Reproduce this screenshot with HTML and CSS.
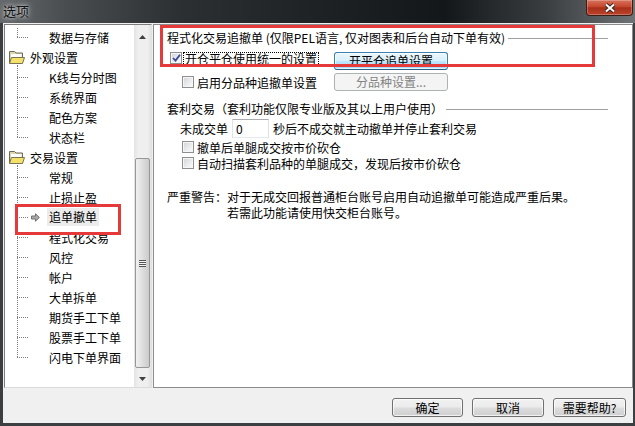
FILE: index.html
```html
<!DOCTYPE html>
<html lang="zh-CN">

<head>
    <meta charset="UTF-8">
    <meta name="viewport" content="width=device-width, initial-scale=1.0">
    <title>选项</title>
    <link rel="stylesheet" href="styles.css">
</head>

<body>
    <div class="window">
        <div class="titlebar">
            <span class="title">选项</span>
            <button class="close">
                <svg width="12" height="10" viewBox="0 0 12 10">
                    <path d="M2 1.5l8 7M10 1.5l-8 7" stroke="#3b2520" stroke-width="4" />
                    <path d="M2 1.5l8 7M10 1.5l-8 7" stroke="#fff" stroke-width="2" />
                </svg>
            </button>
        </div>

        <div class="client">
            <div class="panes">
                <div class="tree">
                    <ul class="tree-list">
                        <li class="group">
                            <ul class="children top">
                                <li class="node">数据与存储</li>
                            </ul>
                        </li>
                        <li class="group">
                            <div class="parent">
                                <svg class="folder" width="16" height="14" viewBox="0 0 16 14">
                                    <path d="M0.5 1.5h5l1.5 1.5h6.5v10h-13z" fill="#dcd6b0" stroke="#6b6b5a" />
                                    <path d="M2 4h10.5v4H2z" fill="#fff" />
                                    <path d="M0.5 13.5l2-6h13l-2 6z" fill="#f3e16a" stroke="#7b7450" />
                                </svg>
                                外观设置
                            </div>
                            <ul class="children">
                                <li class="node">K线与分时图</li>
                                <li class="node">系统界面</li>
                                <li class="node">配色方案</li>
                                <li class="node">状态栏</li>
                            </ul>
                        </li>
                        <li class="group">
                            <div class="parent">
                                <svg class="folder" width="16" height="14" viewBox="0 0 16 14">
                                    <path d="M0.5 1.5h5l1.5 1.5h6.5v10h-13z" fill="#dcd6b0" stroke="#6b6b5a" />
                                    <path d="M2 4h10.5v4H2z" fill="#fff" />
                                    <path d="M0.5 13.5l2-6h13l-2 6z" fill="#f3e16a" stroke="#7b7450" />
                                </svg>
                                交易设置
                            </div>
                            <ul class="children">
                                <li class="node">常规</li>
                                <li class="node">止损止盈</li>
                                <li class="node selected">
                                    <svg class="arrow" width="9" height="9" viewBox="0 0 9 9">
                                        <path d="M0.5 3h4V0.8L8.4 4.5 4.5 8.2V6h-4z" fill="#a9a9a9" stroke="#707070" />
                                    </svg>
                                    <span class="label">追单撤单</span>
                                </li>
                                <li class="node">程式化交易</li>
                                <li class="node">风控</li>
                                <li class="node">帐户</li>
                                <li class="node">大单拆单</li>
                                <li class="node">期货手工下单</li>
                                <li class="node">股票手工下单</li>
                                <li class="node">闪电下单界面</li>
                            </ul>
                        </li>
                    </ul>

                    <div class="scrollbar">
                        <div class="sb-btn up">
                            <svg width="7" height="4" viewBox="0 0 7 4"><path d="M0 4L3.5 0 7 4z" fill="#404040" /></svg>
                        </div>
                        <div class="sb-track">
                            <div class="sb-thumb">
                                <span class="grip"></span>
                            </div>
                        </div>
                        <div class="sb-btn down">
                            <svg width="7" height="4" viewBox="0 0 7 4"><path d="M0 0L3.5 4 7 0z" fill="#404040" /></svg>
                        </div>
                    </div>
                </div>

                <div class="page">
                    <div class="section-head">程式化交易追撤单 (仅限PEL语言, 仅对图表和后台自动下单有效)</div>

                    <div class="opt-row row-a">
                        <div class="check">
                            <span class="chk">
                                <svg width="9" height="8" viewBox="0 0 9 8"><path d="M1 4l2.5 2.6L8 0.8" fill="none" stroke="#34479a" stroke-width="1.8" /></svg>
                            </span>
                            <span class="focus">开仓平仓使用统一的设置</span>
                        </div>
                        <button class="btn hot">开平仓追单设置</button>
                    </div>

                    <div class="opt-row row-b">
                        <div class="check indent">
                            <span class="chk"></span>
                            <span>启用分品种追撤单设置</span>
                        </div>
                        <button class="btn" disabled>分品种设置...</button>
                    </div>

                    <div class="section-head second">套利交易（套利功能仅限专业版及其以上用户使用）</div>

                    <div class="wait-row">
                        <span>未成交单</span>
                        <input class="num" type="text" value="0">
                        <span>秒后不成交就主动撤单并停止套利交易</span>
                    </div>

                    <div class="check line indent">
                        <span class="chk"></span>
                        <span>撤单后单腿成交按市价砍仓</span>
                    </div>
                    <div class="check line indent">
                        <span class="chk"></span>
                        <span>自动扫描套利品种的单腿成交，发现后按市价砍仓</span>
                    </div>

                    <div class="warning">
                        <span class="warn-label">严重警告：</span>
                        <div class="warn-text">
                            <div>对于无成交回报普通柜台账号启用自动追撤单可能造成严重后果。</div>
                            <div>若需此功能请使用快交柜台账号。</div>
                        </div>
                    </div>

                    <div class="mark"></div>
                </div>
            </div>

            <div class="footer">
                <button class="btn ok">确定</button>
                <button class="btn cancel">取消</button>
                <button class="btn help">需要帮助?</button>
            </div>
        </div>
    </div>
</body>

</html>
```

FILE: styles.css
```css
* {
    margin: 0;
    padding: 0;
    box-sizing: border-box;
}

body {
    width: 635px;
    height: 426px;
    overflow: hidden;
    font-family: "Noto Sans CJK SC", "Liberation Sans", sans-serif;
    font-size: 12px;
    color: #000;
}

button,
input {
    font: inherit;
    color: inherit;
}

ul {
    list-style: none;
}

.window {
    width: 635px;
    height: 426px;
    display: flex;
    flex-direction: column;
    background: #3b3f42;
}

/* title bar */
.titlebar {
    height: 23px;
    display: flex;
    align-items: flex-start;
    padding-right: 2px;
    background: linear-gradient(90deg, #65696c 0%, #4a4e51 10%, #2c3033 28%, #1f2326 48%, #14171a 70%, #3a3e41 86%, #6e7275 100%);
}

.title {
    padding: 3px 0 0 3px;
    font-size: 13px;
    line-height: 16px;
    color: #111;
    text-shadow: 0 0 6px rgba(255, 255, 255, .8), 0 0 3px rgba(255, 255, 255, .6);
}

.close {
    margin-left: auto;
    width: 47px;
    height: 16px;
    display: flex;
    align-items: center;
    justify-content: center;
    border: 1px solid #3d1d15;
    border-top: none;
    border-radius: 0 0 4px 4px;
    background: linear-gradient(#d8735c 0%, #c5472e 45%, #a92f18 52%, #bb442b 100%);
    box-shadow: inset 0 0 0 1px rgba(255, 255, 255, .25);
}

/* client area */
.client {
    flex: 1;
    display: flex;
    flex-direction: column;
    margin: 0 2px 3px 3px;
    background: #f0f0f0;
}

.panes {
    height: 365px;
    display: flex;
    padding-top: 1px;
}

/* tree */
.tree {
    width: 148px;
    margin-left: 1px;
    display: flex;
    background: #fff;
    border: 1px solid;
    border-color: #7d7d7d #e1e1e1 #dadada #7d7d7d;
}

.tree-list {
    flex: 1;
    padding-top: 2px;
    overflow: hidden;
    white-space: nowrap;
}

.children {
    position: relative;
}

.children::before {
    content: '';
    position: absolute;
    left: 12px;
    top: -2px;
    bottom: 10px;
    border-left: 1px dotted #7f7f7f;
}

.children.top::before {
    top: 1px;
}

.node,
.parent {
    height: 20px;
    display: flex;
    align-items: center;
}

.node::before {
    content: '';
    width: 11px;
    margin-left: 12px;
    margin-right: 21px;
    border-top: 1px dotted #7f7f7f;
}

.parent {
    padding-left: 4px;
    gap: 5px;
}

.node.selected {
    position: relative;
}

.node.selected::before {
    margin-right: 3px;
}

.arrow {
    margin-right: 7px;
    flex: none;
}

.label {
    height: 18px;
    line-height: 18px;
    padding: 0 2px;
    background: #ececec;
}

.node.selected::after {
    content: '';
    position: absolute;
    left: 10px;
    top: -3px;
    width: 100px;
    height: 25px;
    border: 3px solid #e63a3a;
}

/* scrollbar */
.scrollbar {
    width: 17px;
    display: flex;
    flex-direction: column;
    background: linear-gradient(90deg, #e4e4e4, #efefef 25%, #efefef 80%, #e2e2e2);
}

.sb-btn {
    height: 17px;
    display: flex;
    align-items: center;
    justify-content: center;
}

.sb-btn.up {
    padding-top: 6px;
}

.sb-track {
    flex: 1;
    padding: 116px 1px 0;
}

.sb-thumb {
    height: 210px;
    display: flex;
    align-items: center;
    justify-content: center;
    border: 1px solid #979797;
    border-radius: 2px;
    background: linear-gradient(90deg, #f1f1f1, #dcdcdc 55%, #cbcbcb);
}

.grip {
    width: 7px;
    height: 7px;
    background: repeating-linear-gradient(#555 0 1px, #f4f4f4 1px 2px);
}

/* right page */
.page {
    flex: 1;
    position: relative;
    margin-left: 1px;
    padding: 6px 24px 0 13px;
    background: #fff;
    border: 1px solid #8c8c8c;
}

.section-head {
    height: 14px;
    line-height: 14px;
    display: flex;
    align-items: center;
    white-space: nowrap;
}

.section-head::after {
    content: '';
    flex: 1;
    margin-left: 3px;
    border-top: 1px solid #a0a0a0;
}

.section-head.second {
    margin-top: 11px;
}

.opt-row {
    display: grid;
    grid-template-columns: 167px 114px;
    height: 18px;
}

.row-a {
    margin-top: 7px;
    align-items: start;
}

.row-b {
    margin-top: 3px;
    align-items: center;
}

.check {
    display: flex;
    align-items: center;
    gap: 3px;
    white-space: nowrap;
}

.row-a .check {
    padding-left: 3px;
    gap: 1px;
    align-items: flex-start;
}

.check.indent {
    padding-left: 15px;
}

.check.line {
    height: 16px;
}

.chk {
    width: 12px;
    height: 12px;
    flex: none;
    display: flex;
    align-items: center;
    justify-content: center;
    border: 1px solid #8e8f8f;
    background: linear-gradient(135deg, #d0d3d8 0%, #eceef0 60%, #fbfbfb 100%);
    box-shadow: inset 0 0 0 1px #f6f6f6;
}

.focus {
    line-height: 12px;
    padding: 0 1px;
    border: 1px dotted #000;
}

.btn {
    height: 18px;
    line-height: 16px;
    border: 1px solid #707070;
    border-radius: 3px;
    background: linear-gradient(#f2f2f2 0%, #ebebeb 48%, #dddddd 52%, #cfcfcf 100%);
    box-shadow: inset 0 0 0 1px rgba(255, 255, 255, .7);
    text-align: center;
}

.btn.hot {
    border-color: #3c7fb1;
    border-bottom-color: #2c628b;
    background: linear-gradient(#eaf6fd 0%, #d9f0fc 48%, #bee6fd 52%, #a7d9f5 100%);
}

.btn:disabled {
    border-color: #adb2b5;
    background: #f4f4f4;
    box-shadow: none;
    color: #838383;
}

.wait-row {
    height: 19px;
    margin-top: 3px;
    padding-left: 13px;
    display: flex;
    align-items: center;
    white-space: nowrap;
}

.num {
    width: 37px;
    height: 19px;
    margin: 0 4px 0 4px;
    padding-left: 3px;
    border: 1px solid;
    border-color: #abadb3 #dbdfe6 #e3e9ef #e2e3ea;
    outline: none;
}

.wait-row+.check {
    margin-top: 1px;
}

.warning {
    margin-top: 18px;
    display: flex;
    line-height: 16px;
    white-space: nowrap;
}

.mark {
    position: absolute;
    left: 6px;
    top: 0;
    width: 435px;
    height: 42px;
    border: 3px solid #e63a3a;
}

/* footer buttons */
.footer {
    flex: 1;
    display: flex;
    justify-content: flex-end;
    align-items: flex-start;
    gap: 9px;
    padding: 10px 7px 0 0;
}

.footer .btn {
    height: 19px;
    line-height: 17px;
}

.ok {
    width: 71px;
}

.cancel {
    width: 72px;
}

.help {
    width: 73px;
}
```
